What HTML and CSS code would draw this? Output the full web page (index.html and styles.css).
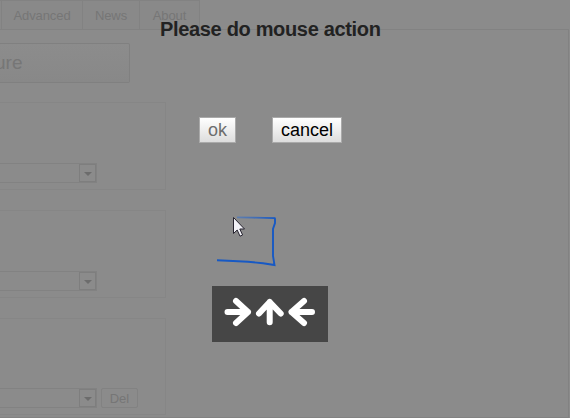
FILE: index.html
```
<!DOCTYPE html>
<html lang="en">
<head>
  <meta charset="UTF-8">
  <title>Mouse gesture options</title>
  <link rel="stylesheet" href="styles.css">
</head>
<body>
  <div class="page">
    <div class="tabs">
      <div class="tab tab-first"></div>
      <div class="tab tab-advanced">Advanced</div>
      <div class="tab tab-news">News</div>
      <div class="tab tab-about">About</div>
    </div>
    <div class="panel">
      <div class="gesture">ure</div>
      <div class="group">
        <div class="select"><span class="arrow"></span></div>
      </div>
      <div class="group">
        <div class="select"><span class="arrow"></span></div>
      </div>
      <div class="group group-last">
        <div class="select"><span class="arrow"></span></div>
        <div class="del">Del</div>
      </div>
    </div>
  </div>

  <div class="overlay">
    <h1>Please do mouse action</h1>
    <div class="buttons">
      <button disabled>ok</button>
      <button class="cancel">cancel</button>
    </div>
    <svg class="trace" width="90" height="70" viewBox="0 0 90 70">
      <defs>
        <linearGradient id="fade" gradientUnits="userSpaceOnUse" x1="32" y1="0" x2="70" y2="0">
          <stop offset="0" stop-color="#5f7eae"/>
          <stop offset=".5" stop-color="#416db5"/>
          <stop offset="1" stop-color="#1759c4"/>
        </linearGradient>
      </defs>
      <path d="M12 55.3L28 56L43 56.7L58 58.3L69.5 60L68 51V24L70 18V13.3" fill="none" stroke="#1759c4" stroke-width="1.9"/>
      <path d="M32 12.3L48 12.7L70.5 13.2" fill="none" stroke="url(#fade)" stroke-width="1.8"/>
      <path d="M28.5 12.5V28.5L32.2 25L35 31.2L37.6 30L34.8 24H39.5Z" fill="#f2f2f7" stroke="#25222e" stroke-width="1"/>
    </svg>
    <div class="actions">
      <svg width="116" height="56" viewBox="0 0 116 56" fill="none" stroke="#fff" stroke-width="6" stroke-linecap="round" stroke-linejoin="round">
        <path d="M15.5 26H36M24 15L36 26L24 37"/>
        <path d="M57.7 36.2V16M47 27.5L57.7 16L68.7 27.5"/>
        <path d="M100 26H79.5M92 15L79.5 26L92 37"/>
      </svg>
    </div>
  </div>
</body>
</html>
```

FILE: styles.css
```
* { box-sizing: border-box; }
body {
  margin: 0;
  height: 418px;
  overflow: hidden;
  position: relative;
  background: #8b8b8b;
  font-family: Arial, "Liberation Sans", sans-serif;
}

/* dimmed options page */
.page { width: 569px; height: 418px; color: #767676; }
.tabs { display: flex; height: 29px; }
.tab {
  border-top: 1px solid #828282;
  border-right: 1px solid #828282;
  background: #898989;
  font-size: 13px;
  letter-spacing: -.1px;
  line-height: 29px;
  text-align: center;
}
.tab-first { width: 2px; }
.tab-advanced { width: 81px; }
.tab-news { width: 57px; }
.tab-about { width: 60px; }
.panel {
  height: 389px;
  border: 1px solid #828282;
  border-left: 0;
  padding-top: 13px;
}
.gesture {
  width: 130px;
  height: 40px;
  border: 1px solid #808080;
  border-left: 0;
  border-radius: 0 2px 2px 0;
  background: linear-gradient(#8c8c8c, #888);
  font-size: 19px;
  line-height: 38px;
  text-indent: -5px;
}
.group {
  display: flex;
  width: 166px;
  height: 88px;
  margin-top: 20px;
  padding-top: 60px;
  border: 1px solid #868686;
  border-left: 0;
}
.gesture + .group { margin-top: 19px; }
.group-last { height: 97px; padding-top: 69px; }
.select {
  display: flex;
  justify-content: flex-end;
  width: 97px;
  height: 20px;
  border: 1px solid #828282;
  border-left: 0;
}
.arrow {
  width: 17px;
  height: 18px;
  border: 1px solid #7e7e7e;
  padding: 7px 4px 0;
}
.arrow::before {
  content: "";
  display: block;
  border: 4px solid transparent;
  border-top-color: #6c6c6c;
  border-bottom: 0;
  width: 0;
}
.del {
  width: 37px;
  height: 20px;
  margin-left: 4px;
  border: 1px solid #828282;
  border-radius: 2px;
  font-size: 13px;
  line-height: 19px;
  text-align: center;
}

/* gesture input */
.overlay { position: absolute; top: 0; left: 0; width: 570px; height: 418px; }
h1 {
  margin: 0;
  padding: 17px 0 0 160px;
  color: #222;
  font-size: 20px;
  letter-spacing: -.33px;
  line-height: 24px;
  white-space: nowrap;
}
.buttons { display: flex; gap: 36px; padding: 76px 0 0 199px; }
button {
  width: 37px;
  height: 26px;
  padding: 0;
  border: 1px solid #aaa;
  background: linear-gradient(#fff, #ddd);
  color: #6d6d6d;
  font: 18px Arial, "Liberation Sans", sans-serif;
}
.cancel { width: 70px; color: #000; }
.trace { display: block; margin: 62px 0 0 205px; }
.actions {
  width: 116px;
  height: 56px;
  margin: 11px 0 0 212px;
  background: #464646;
}
.actions svg { display: block; }
```
